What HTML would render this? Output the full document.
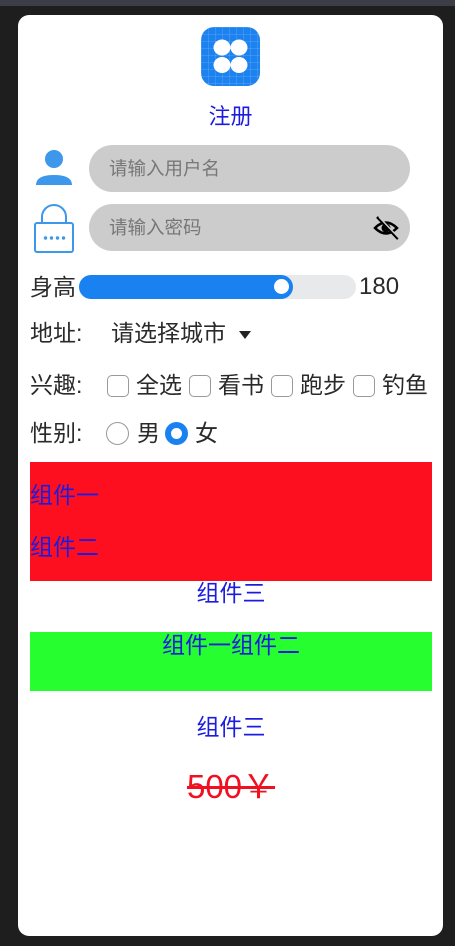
<!DOCTYPE html>
<html><head><meta charset="utf-8">
<style>
*{margin:0;padding:0;box-sizing:border-box}
body{width:455px;height:946px;background:#1e1e1f;position:relative;overflow:hidden;font-family:"Liberation Sans","Noto Sans CJK SC",sans-serif}
.top{position:absolute;left:0;top:0;width:455px;height:6px;background:#3b3e46}
.scr{position:absolute;left:18px;top:15px;width:425px;height:921px;background:#fff;border-radius:11px}
.a{position:absolute;white-space:nowrap}
.t{font-size:23px;color:#2a2a2a;line-height:26px}
.blue{color:#1c1ce0}
.cb{position:absolute;width:22px;height:22px;border:1.5px solid #999;border-radius:5px;background:#fff}
.rd{position:absolute;width:23px;height:23px;border:1.5px solid #999;border-radius:50%}
</style></head><body>
<div class="top"></div>
<div class="scr"></div>
<!-- logo -->
<div class="a" style="left:201px;top:27px;width:59px;height:59px;border-radius:13px;background:#1c82f0;background-image:linear-gradient(rgba(255,255,255,.12) 1px,transparent 1px),linear-gradient(90deg,rgba(255,255,255,.12) 1px,transparent 1px);background-size:7px 7px">
<svg width="59" height="59" style="position:absolute;left:0;top:0"><g fill="#fff"><ellipse cx="21" cy="20.5" rx="8.5" ry="8"/><ellipse cx="38" cy="20.5" rx="8.5" ry="8"/><ellipse cx="21" cy="38" rx="8.5" ry="8"/><ellipse cx="38" cy="38" rx="8.5" ry="8"/></g></svg></div>
<div class="a blue" style="left:0;width:461px;text-align:center;top:103px;font-size:22px;line-height:28px">注册</div>
<!-- user -->
<svg class="a" style="left:35px;top:149px" width="38" height="38"><circle cx="19" cy="10" r="9" fill="#3d97ea"/><path d="M1 36 Q1 26 19 26 Q37 26 37 36 Z" fill="#3d97ea"/></svg>
<div class="a" style="left:89px;top:145px;width:321px;height:47px;border-radius:24px;background:#cccccc"></div>
<div class="a" style="left:109px;top:156px;font-size:18.5px;color:#777;line-height:26px">请输入用户名</div>
<!-- lock -->
<svg class="a" style="left:33px;top:204px" width="42" height="50"><path d="M9 19 V13 A12 12 0 0 1 33 13 V19" fill="none" stroke="#3d97ea" stroke-width="2"/><rect x="2" y="19" width="38" height="29" rx="2" fill="none" stroke="#3d97ea" stroke-width="2"/><g fill="#3d97ea"><circle cx="12.5" cy="34" r="1.7"/><circle cx="18.5" cy="34" r="1.7"/><circle cx="24.5" cy="34" r="1.7"/><circle cx="30.5" cy="34" r="1.7"/></g></svg>
<div class="a" style="left:89px;top:204px;width:321px;height:47px;border-radius:24px;background:#cccccc"></div>
<div class="a" style="left:109px;top:215px;font-size:18.5px;color:#777;line-height:26px">请输入密码</div>
<svg class="a" style="left:373px;top:215px" width="28" height="26"><path d="M2 13 Q13 2 24 13 Q13 24 2 13 Z" fill="none" stroke="#000" stroke-width="2.5"/><circle cx="13" cy="13" r="4.5" fill="#000"/><path d="M4 2 L25 24" stroke="#000" stroke-width="2.5"/><path d="M6 2 L27 24" stroke="#ccc" stroke-width="1.5"/></svg>
<!-- slider -->
<div class="a t" style="left:30px;top:274px">身高</div>
<div class="a" style="left:79px;top:275px;width:277px;height:24px;border-radius:12px;background:#e8e9eb"></div>
<div class="a" style="left:79px;top:275px;width:214px;height:24px;border-radius:12px;background:#1a82f0"></div>
<div class="a" style="left:274px;top:279px;width:15px;height:15px;border-radius:50%;background:#fff"></div>
<div class="a" style="left:359px;top:273px;font-size:24px;line-height:27px;color:#2a2a2a">180</div>
<!-- address -->
<div class="a t" style="left:30px;top:320px">地址:</div>
<div class="a t" style="left:111px;top:320px">请选择城市</div>
<svg class="a" style="left:238px;top:330px" width="14" height="10"><path d="M1 1 H13 L7 9 Z" fill="#222"/></svg>
<!-- interests -->
<div class="a t" style="left:30px;top:372px">兴趣:</div>
<div class="cb" style="left:107px;top:375px"></div><div class="a t" style="left:136px;top:372px">全选</div>
<div class="cb" style="left:189px;top:375px"></div><div class="a t" style="left:218px;top:372px">看书</div>
<div class="cb" style="left:271px;top:375px"></div><div class="a t" style="left:300px;top:372px">跑步</div>
<div class="cb" style="left:353px;top:375px"></div><div class="a t" style="left:382px;top:372px">钓鱼</div>
<!-- gender -->
<div class="a t" style="left:30px;top:420px">性别:</div>
<div class="rd" style="left:106px;top:422px"></div><div class="a t" style="left:137px;top:420px">男</div>
<div class="rd" style="left:165px;top:422px;border:6px solid #1a82f0"></div><div class="a t" style="left:195px;top:420px">女</div>
<!-- red -->
<div class="a" style="left:30px;top:462px;width:402px;height:119px;background:#fe0f1f"></div>
<div class="a t blue" style="left:30px;top:482px">组件一</div>
<div class="a t blue" style="left:30px;top:534px">组件二</div>
<div class="a t blue" style="left:0;width:462px;text-align:center;top:580px">组件三</div>
<!-- green -->
<div class="a" style="left:30px;top:632px;width:402px;height:59px;background:#27fe2f"></div>
<div class="a t blue" style="left:0;width:462px;text-align:center;top:632px">组件一组件二</div>
<div class="a t blue" style="left:0;width:462px;text-align:center;top:714px">组件三</div>
<div class="a" style="left:0;width:462px;text-align:center;top:768px;font-size:33px;line-height:38px;color:#f01020;text-decoration:line-through">500￥</div>
</body></html>
